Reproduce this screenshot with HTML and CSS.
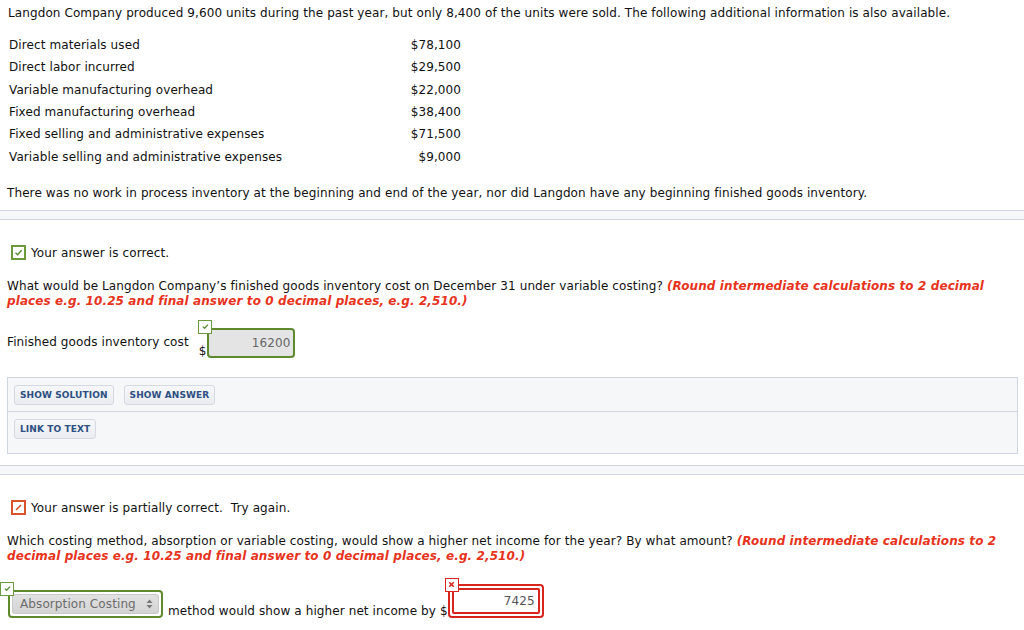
FILE: index.html
```html
<!DOCTYPE html>
<html>
<head>
<meta charset="utf-8">
<link rel="stylesheet" href="styles.css">
</head>
<body>
<div class="problem">
  <p class="intro">Langdon Company produced 9,600 units during the past year, but only 8,400 of the units were sold. The following additional information is also available.</p>
  <table class="data">
    <tr><td class="lbl">Direct materials used</td><td class="val">$78,100</td></tr>
    <tr><td class="lbl">Direct labor incurred</td><td class="val">$29,500</td></tr>
    <tr><td class="lbl">Variable manufacturing overhead</td><td class="val">$22,000</td></tr>
    <tr><td class="lbl">Fixed manufacturing overhead</td><td class="val">$38,400</td></tr>
    <tr><td class="lbl">Fixed selling and administrative expenses</td><td class="val">$71,500</td></tr>
    <tr><td class="lbl">Variable selling and administrative expenses</td><td class="val">$9,000</td></tr>
  </table>
  <p class="note">There was no work in process inventory at the beginning and end of the year, nor did Langdon have any beginning finished goods inventory.</p>
</div>
<div class="sep"></div>

<div class="part">
  <div class="status">
    <span class="icon ok"><svg width="11" height="11" viewBox="0 0 11 11"><path d="M2.5 5.8 L4.6 7.8 L8.6 3.3" fill="none" stroke="#5a8a2e" stroke-width="1.4"/></svg></span>
    <span>Your answer is correct.</span>
  </div>
  <p class="question">What would be Langdon Company’s finished goods inventory cost on December 31 under variable costing? <em class="hint">(Round intermediate calculations to 2 decimal places e.g. 10.25 and final answer to 0 decimal places, e.g. 2,510.)</em></p>
  <div class="answer-row">
    <span class="ans-label">Finished goods inventory cost</span>
    <span class="dollar">$</span>
    <span class="field-wrap">
      <span class="mini ok-mini"><svg width="9" height="9" viewBox="0 0 9 9"><path d="M1.8 4.6 L3.6 6.3 L7 2.6" fill="none" stroke="#5a8a2e" stroke-width="1.3"/></svg></span>
      <span class="field green">16200</span>
    </span>
  </div>
  <div class="panel">
    <div class="panel-row">
      <span class="btn">SHOW SOLUTION</span>
      <span class="btn">SHOW ANSWER</span>
    </div>
    <div class="panel-row last">
      <span class="btn">LINK TO TEXT</span>
    </div>
  </div>
</div>
<div class="sep sep2"></div>

<div class="part">
  <div class="status">
    <span class="icon partial"><svg width="11" height="11" viewBox="0 0 11 11"><path d="M3 8 L8 3" fill="none" stroke="#d94a1e" stroke-width="1.5"/></svg></span>
    <span>Your answer is partially correct.&nbsp; Try again.</span>
  </div>
  <p class="question">Which costing method, absorption or variable costing, would show a higher net income for the year? By what amount? <em class="hint">(Round intermediate calculations to 2 decimal places e.g. 10.25 and final answer to 0 decimal places, e.g. 2,510.)</em></p>
  <div class="answer-row2">
    <span class="select-wrap">
      <span class="mini ok-mini sel-mini"><svg width="9" height="9" viewBox="0 0 9 9"><path d="M1.8 4.6 L3.6 6.3 L7 2.6" fill="none" stroke="#5a8a2e" stroke-width="1.3"/></svg></span>
      <span class="select-outer"><span class="select">Absorption Costing<svg class="arrows" width="7" height="10" viewBox="0 0 7 10"><path d="M3.5 0.5 L6.5 4 L0.5 4 Z M3.5 9.5 L6.5 6 L0.5 6 Z" fill="#777"/></svg></span></span>
    </span>
    <span class="tail">method would show a higher net income by $</span>
    <span class="field-wrap">
      <span class="mini bad-mini"><svg width="9" height="9" viewBox="0 0 9 9"><path d="M2.2 2.2 L6.8 6.8 M6.8 2.2 L2.2 6.8" fill="none" stroke="#d9261c" stroke-width="1.6"/></svg></span>
      <span class="field red-outer"><span class="red-inner">7425</span></span>
    </span>
  </div>
</div>
</body>
</html>
```

FILE: styles.css
```css
* { box-sizing: border-box; }
html, body { margin: 0; padding: 0; background: #fff; }
body {
  font-family: Verdana, "DejaVu Sans", sans-serif;
  font-size: 12px;
  letter-spacing: 0.1px;
  color: #111;
  width: 1024px;
  overflow: hidden;
}
p { margin: 0; }

.problem { padding: 5px 7px 0 7px; }
.intro { line-height: 16px; padding-left: 1px; }
.data { border-collapse: collapse; margin: 13px 0 0 2px; }
.data td { padding: 0; height: 22.3px; line-height: 16px; }
.data .lbl { width: 400px; }
.data .val { width: 52px; text-align: right; }
.note { margin-top: 17px; line-height: 16px; }

.sep {
  height: 10px;
  margin-top: 9px;
  background: #f6f7f9;
  border-top: 1px solid #cfd6e2;
  border-bottom: 1px solid #cfd6e2;
}
.sep2 { margin-top: 11px; }

.part { padding: 0 14px 0 7px; }
.status {
  display: flex;
  align-items: center;
  gap: 5px;
  margin-top: 25px;
  padding-left: 4px;
  line-height: 16px;
}
.icon {
  width: 15px; height: 15px;
  border: 2px solid #6b9a3a;
  display: inline-flex; align-items: center; justify-content: center;
  background: #fff;
}
.icon.partial { border-color: #d9532b; }
.question { margin-top: 18px; line-height: 15px; }
.hint { color: #e8331c; font-weight: bold; font-style: italic; }

.answer-row {
  display: flex;
  align-items: flex-end;
  margin-top: 11px;
  height: 38px;
}
.ans-label { line-height: 16px; padding-bottom: 8px; }
.dollar { margin-left: 10px; margin-right: 1px; line-height: 14px; }
.field-wrap { position: relative; display: inline-block; }
.mini {
  position: absolute;
  width: 14px; height: 14px;
  border: 1px solid #6b9a3a;
  background: #fff;
  display: flex; align-items: center; justify-content: center;
}
.ok-mini { left: -9px; top: -8px; }
.bad-mini { border-color: #d9261c; left: -3px; top: -6px; }
.field.green {
  display: block;
  width: 88px; height: 30px;
  border: 2px solid #5e8a2e;
  border-radius: 4px;
  background: #e4e4e4;
  color: #666;
  text-align: right;
  padding: 5px 3px 0 0;
  line-height: 16px;
}

.panel {
  margin-top: 19px;
  width: 1011px;
  border: 1px solid #cfd6e2;
  background: #f6f7f9;
}
.panel-row {
  display: flex;
  gap: 10px;
  padding: 7px 6px 6px 6px;
  border-bottom: 1px solid #cfd6e2;
  height: 34px;
}
.panel-row.last { border-bottom: none; height: 41px; }
.btn {
  display: inline-block;
  height: 20px;
  padding: 0 5px;
  font-size: 9px;
  font-weight: bold;
  color: #2d4f82;
  line-height: 18px;
  letter-spacing: 0.1px;
  border: 1px solid #d5d9e1;
  border-radius: 3px;
  background: linear-gradient(#f6f7f9, #e9ecf1);
}

.answer-row2 {
  display: flex;
  align-items: flex-end;
  margin-top: 20px;
  margin-left: -7px;
}
.select-wrap { position: relative; display: inline-block; margin-left: 8px; }
.sel-mini { left: -8px; top: -8px; }
.select-outer {
  display: block;
  width: 155px; height: 28px;
  border: 2px solid #5e8a2e;
  border-radius: 4px;
  padding: 2px;
  background: #fff;
}
.select {
  display: flex;
  align-items: center;
  justify-content: space-between;
  height: 20px;
  border-radius: 4px;
  background: linear-gradient(#e2e2e2, #d3d3d3);
  color: #6b6b6b;
  font-size: 12px;
  padding: 0 6px 0 8px;
  box-shadow: inset 0 0 0 1px #c9c9c9;
}
.tail { margin-left: 5px; line-height: 14px; }
.red-outer {
  display: block;
  width: 96px; height: 34px;
  border: 2px solid #d9261c;
  border-radius: 4px;
  padding: 2px;
  background: #fff;
}
.red-inner {
  display: block;
  height: 26px;
  border: 2px solid #d9261c;
  border-radius: 2px;
  text-align: right;
  color: #555;
  padding: 3px 3px 0 0;
  line-height: 16px;
}
```
